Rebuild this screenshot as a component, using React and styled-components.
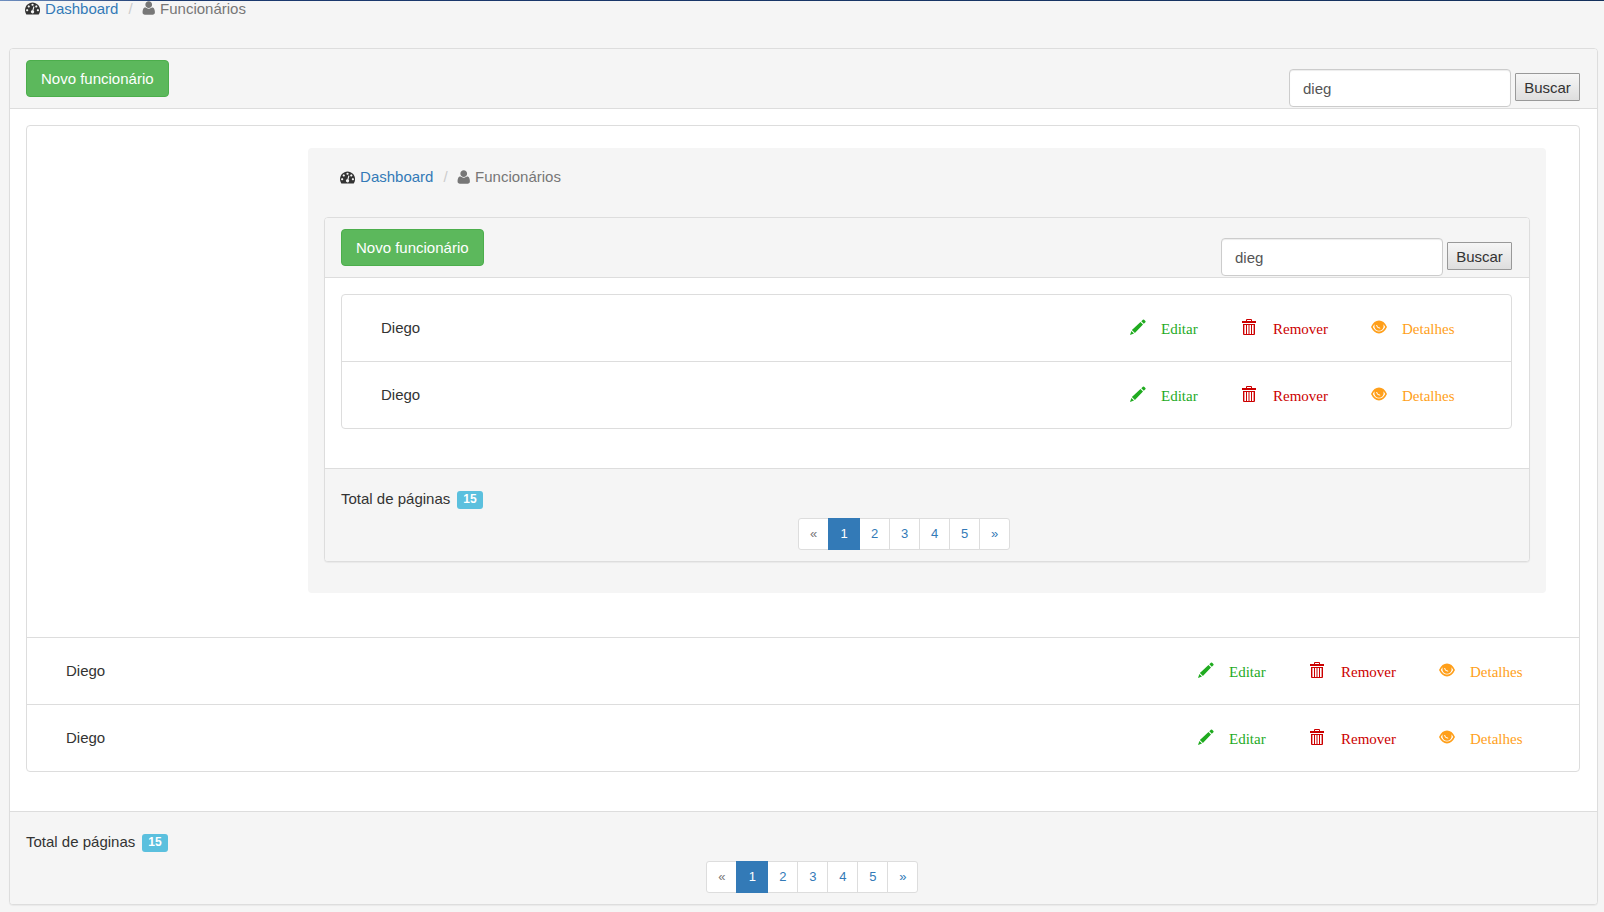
import React from 'react';
import styled, { createGlobalStyle } from 'styled-components';

const employees = [
  { id: 1, name: 'Diego' },
  { id: 2, name: 'Diego' },
];

const pages = [1, 2, 3, 4, 5];

function DashboardIcon() {
  return (
    <Glyph viewBox="0 64 1792 1664" aria-hidden="true">
      <path d="M384 1152q0-53-37.5-90.5t-90.5-37.5-90.5 37.5-37.5 90.5 37.5 90.5 90.5 37.5 90.5-37.5 37.5-90.5zm192-448q0-53-37.5-90.5t-90.5-37.5-90.5 37.5-37.5 90.5 37.5 90.5 90.5 37.5 90.5-37.5 37.5-90.5zm428 481l101-382q6-26-7.5-48.5t-38.5-29.5-48 6.5-30 39.5l-101 382q-60 5-107 43.5t-63 98.5q-20 77 20 146t117 89 146-20 89-117q16-60-6-117t-72-91zm660-33q0-53-37.5-90.5t-90.5-37.5-90.5 37.5-37.5 90.5 37.5 90.5 90.5 37.5 90.5-37.5 37.5-90.5zm-640-640q0-53-37.5-90.5t-90.5-37.5-90.5 37.5-37.5 90.5 37.5 90.5 90.5 37.5 90.5-37.5 37.5-90.5zm448 192q0-53-37.5-90.5t-90.5-37.5-90.5 37.5-37.5 90.5 37.5 90.5 90.5 37.5 90.5-37.5 37.5-90.5zm320 448q0 261-141 483-19 29-54 29h-1402q-35 0-54-29-141-221-141-483 0-182 71-348t191-286 286-191 348-71 348 71 286 191 191 286 71 348z" />
    </Glyph>
  );
}

function UserIcon() {
  return (
    <Glyph viewBox="128 96 1536 1600" aria-hidden="true">
      <path d="M1600 1405q0 120-73 189.5t-194 69.5h-874q-121 0-194-69.5t-73-189.5q0-53 3.5-103.5t14-109 26.5-108.5 43-97.5 62-81 85.5-53.5 111.5-20q9 0 42 21.5t74.5 48 108 48 133.5 21.5 133.5-21.5 108-48 74.5-48 42-21.5q61 0 111.5 20t85.5 53.5 62 81 43 97.5 26.5 108.5 14 109 3.5 103.5zm-320-893q0 159-112.5 271.5t-271.5 112.5-271.5-112.5-112.5-271.5 112.5-271.5 271.5-112.5 271.5 112.5 112.5 271.5z" />
    </Glyph>
  );
}

function PencilIcon() {
  return (
    <Glyph viewBox="0 0 16 16" aria-hidden="true">
      <path d="M0 16 L1.4 12 L4 14.6 Z M1.9 11.1 L10.5 3 L13 5.5 L4.9 14.1 Z M11.3 2.2 L12.9 0.7 Q13.5 0.2 14.1 0.7 L15.4 2 Q15.9 2.6 15.4 3.2 L13.8 4.7 Z" />
    </Glyph>
  );
}

function TrashIcon() {
  return (
    <Glyph viewBox="0 0 16 16" aria-hidden="true">
      <path fillRule="evenodd" d="M4 2V1Q4 0 5 0H9Q10 0 10 1V2H14V4H0V2ZM5 2H9V1H5Z" />
      <path fillRule="evenodd" d="M1 5H13V15Q13 16 12 16H2Q1 16 1 15ZM2.4 6V15H4V6ZM5 6V15H6.5V6ZM7.5 6V15H9V6ZM10 6V15H11.6V6Z" />
    </Glyph>
  );
}

function EyeIcon() {
  return (
    <Glyph viewBox="0 0 16 16" aria-hidden="true">
      <path fillRule="evenodd" d="M0 8Q3 1.6 8 1.6T16 8Q13 14.4 8 14.4T0 8ZM1.8 8Q4.2 12.6 8 12.6T14.2 8Q13.5 6.4 12.2 5.2Q12.6 6.1 12.6 7.2A4.6 4.6 0 0 1 3.4 7.2Q3.4 6.1 3.8 5.2Q2.5 6.4 1.8 8Z" />
      <path fill="none" stroke="#fff" strokeWidth="1" strokeLinecap="round" d="M5.6 6.4Q5.8 9.2 8.8 9.2" />
    </Glyph>
  );
}

function Breadcrumb({ scrolled }) {
  return (
    <Crumbs $scrolled={scrolled} aria-label="breadcrumb">
      <li>
        <DashboardIcon />
        <a href="#dashboard">Dashboard</a>
      </li>
      <li className="active">
        <UserIcon />
        Funcionários
      </li>
    </Crumbs>
  );
}

function EmployeeRow({ name }) {
  return (
    <Row>
      <Name>{name}</Name>
      <Actions>
        <Action href="#editar" $color="#1fab1f"><PencilIcon />Editar</Action>
        <Action href="#remover" $color="#cc0000"><TrashIcon />Remover</Action>
        <Action href="#detalhes" $color="#ff9f1a"><EyeIcon />Detalhes</Action>
      </Actions>
    </Row>
  );
}

function Pagination() {
  return (
    <PageNav aria-label="Paginação">
      <ul>
        <li><PageLink href="#anterior" $disabled>«</PageLink></li>
        {pages.map((page) => (
          <li key={page}>
            <PageLink href={`#${page}`} $active={page === 1}>{page}</PageLink>
          </li>
        ))}
        <li><PageLink href="#proxima">»</PageLink></li>
      </ul>
    </PageNav>
  );
}

function EmployeesPanel({ children }) {
  return (
    <Panel>
      <PanelHeading>
        <NewButton type="button">Novo funcionário</NewButton>
        <SearchForm onSubmit={(e) => e.preventDefault()}>
          <SearchInput type="text" aria-label="Buscar funcionário" defaultValue="dieg" />
          <SearchButton type="submit">Buscar</SearchButton>
        </SearchForm>
      </PanelHeading>
      <PanelBody>
        <List>
          {children && <li>{children}</li>}
          {employees.map((employee) => (
            <EmployeeRow key={employee.id} name={employee.name} />
          ))}
        </List>
      </PanelBody>
      <PanelFooter>
        <Total>Total de páginas <Badge>15</Badge></Total>
        <Pagination />
      </PanelFooter>
    </Panel>
  );
}

function App() {
  return (
    <>
      <GlobalStyle />
      <NavbarEdge />
      <Page>
        <Breadcrumb scrolled />
        <EmployeesPanel>
          {/* search result rendered inside the list */}
          <Result>
            <Breadcrumb />
            <EmployeesPanel />
          </Result>
        </EmployeesPanel>
      </Page>
    </>
  );
}

const GlobalStyle = createGlobalStyle`
* {
    box-sizing: border-box;
}
body {
    margin: 0;
    background: #f5f5f5;
    color: #333;
    font-family: "Liberation Sans", Arial, sans-serif;
    font-size: 15px;
    line-height: 21px;
}
ul, ol {
    margin: 0;
    padding: 0;
    list-style: none;
}
a {
    color: #337ab7;
    text-decoration: none;
}
button, input {
    font-family: inherit;
    font-size: 15px;
}
`

const NavbarEdge = styled.div`
    height: 1px;
    background: linear-gradient(90deg, #6f8fc0, #1c3a70 10%, #14305c);
`

const Page = styled.main`
    padding: 0 6px 7px 9px;
`

const Glyph = styled.svg`
    display: block;
    flex: none;
    height: 16px;
    fill: currentColor;
`

const Crumbs = styled.ol`
    display: flex;
    padding: ${(props) => (props.$scrolled ? '0 16px 33px' : '18px 16px 30px')};
    line-height: ${(props) => (props.$scrolled ? '11px' : '21px')};
    svg {
        height: 14px;
    }
    li {
        display: flex;
        align-items: center;
        gap: 5px;
    }
    li + li::before {
        content: "/";
        padding: 0 4px 0 10px;
        color: #ccc;
    }
    .active {
        color: #777;
    }
`

const Panel = styled.section`
    background: #fff;
    border: 1px solid #ddd;
    border-radius: 4px;
    box-shadow: 0 1px 1px rgba(0, 0, 0, 0.05);
`

const PanelHeading = styled.header`
    display: flex;
    justify-content: space-between;
    align-items: flex-start;
    padding: 11px 17px 0 16px;
    background: #f5f5f5;
    border-bottom: 1px solid #ddd;
    border-radius: 3px 3px 0 0;
`

const NewButton = styled.button`
    height: 37px;
    margin-bottom: 11px;
    padding: 0 14px;
    color: #fff;
    background: #5cb85c;
    border: 1px solid #4cae4c;
    border-radius: 4px;
    cursor: pointer;
`

const SearchForm = styled.form`
    display: flex;
    align-items: center;
    gap: 4px;
    margin-top: 9px;
`

const SearchInput = styled.input`
    width: 222px;
    height: 38px;
    padding: 0 13px;
    color: #555;
    background: #fff;
    border: 1px solid #ccc;
    border-radius: 4px;
    box-shadow: inset 0 1px 1px rgba(0, 0, 0, 0.075);
`

const SearchButton = styled.button`
    width: 65px;
    height: 28px;
    margin-bottom: 2px;
    padding: 0;
    color: #333;
    background: linear-gradient(#f6f6f6, #dedede);
    border: 1px solid #999;
    border-radius: 1px;
`

const PanelBody = styled.div`
    padding: 16px 17px 39px 16px;
`

const List = styled.ul`
    border: 1px solid #ddd;
    border-radius: 4px;
    > li + li {
        border-top: 1px solid #ddd;
    }
`

const Result = styled.div`
    margin: 22px 33px 44px 281px;
    padding: 0 16px 31px;
    background: #f5f5f5;
    border-radius: 4px;
`

const Row = styled.li`
    display: flex;
    justify-content: space-between;
    align-items: center;
    box-sizing: content-box;
    height: 66px;
    padding: 0 54px 0 39px;
`

const Name = styled.span`
    padding-bottom: 2px;
`

const Actions = styled.div`
    display: grid;
    grid-template-columns: 112px 129px 86px;
`

const Action = styled.a`
    display: flex;
    align-items: center;
    gap: 15px;
    padding-top: 2px;
    color: ${(props) => props.$color};
    font-family: "Liberation Serif", "Times New Roman", serif;
    svg {
        width: 16px;
        margin-bottom: 5px;
    }
`

const PanelFooter = styled.footer`
    padding: 19px 17px 11px 16px;
    background: #f5f5f5;
    border-top: 1px solid #ddd;
    border-radius: 0 0 3px 3px;
`

const Total = styled.div`
    display: flex;
    gap: 7px;
`

const Badge = styled.span`
    height: 18px;
    margin-top: 3px;
    padding: 0 6px;
    color: #fff;
    background: #5bc0de;
    border-radius: 3px;
    font-size: 12px;
    font-weight: 700;
    line-height: 17px;
`

/* seven of twelve columns, pager pushed to the right */
const PageNav = styled.nav`
    width: 58.33%;
    margin-top: 9px;
    padding-right: 14px;
    ul {
        display: flex;
        justify-content: flex-end;
    }
    li + li {
        margin-left: -1px;
    }
    li:first-child a {
        border-radius: 3px 0 0 3px;
    }
    li:last-child a {
        border-radius: 0 3px 3px 0;
    }
`

const PageLink = styled.a`
    display: block;
    position: relative;
    z-index: ${(props) => (props.$active ? 1 : 0)};
    width: ${(props) => (props.$active ? 32 : 31)}px;
    height: 32px;
    color: ${(props) => (props.$active ? '#fff' : props.$disabled ? '#777' : '#337ab7')};
    background: ${(props) => (props.$active ? '#337ab7' : '#fff')};
    border: 1px solid ${(props) => (props.$active ? '#337ab7' : '#ddd')};
    font-size: 13px;
    line-height: 30px;
    text-align: center;
`

export default App;
